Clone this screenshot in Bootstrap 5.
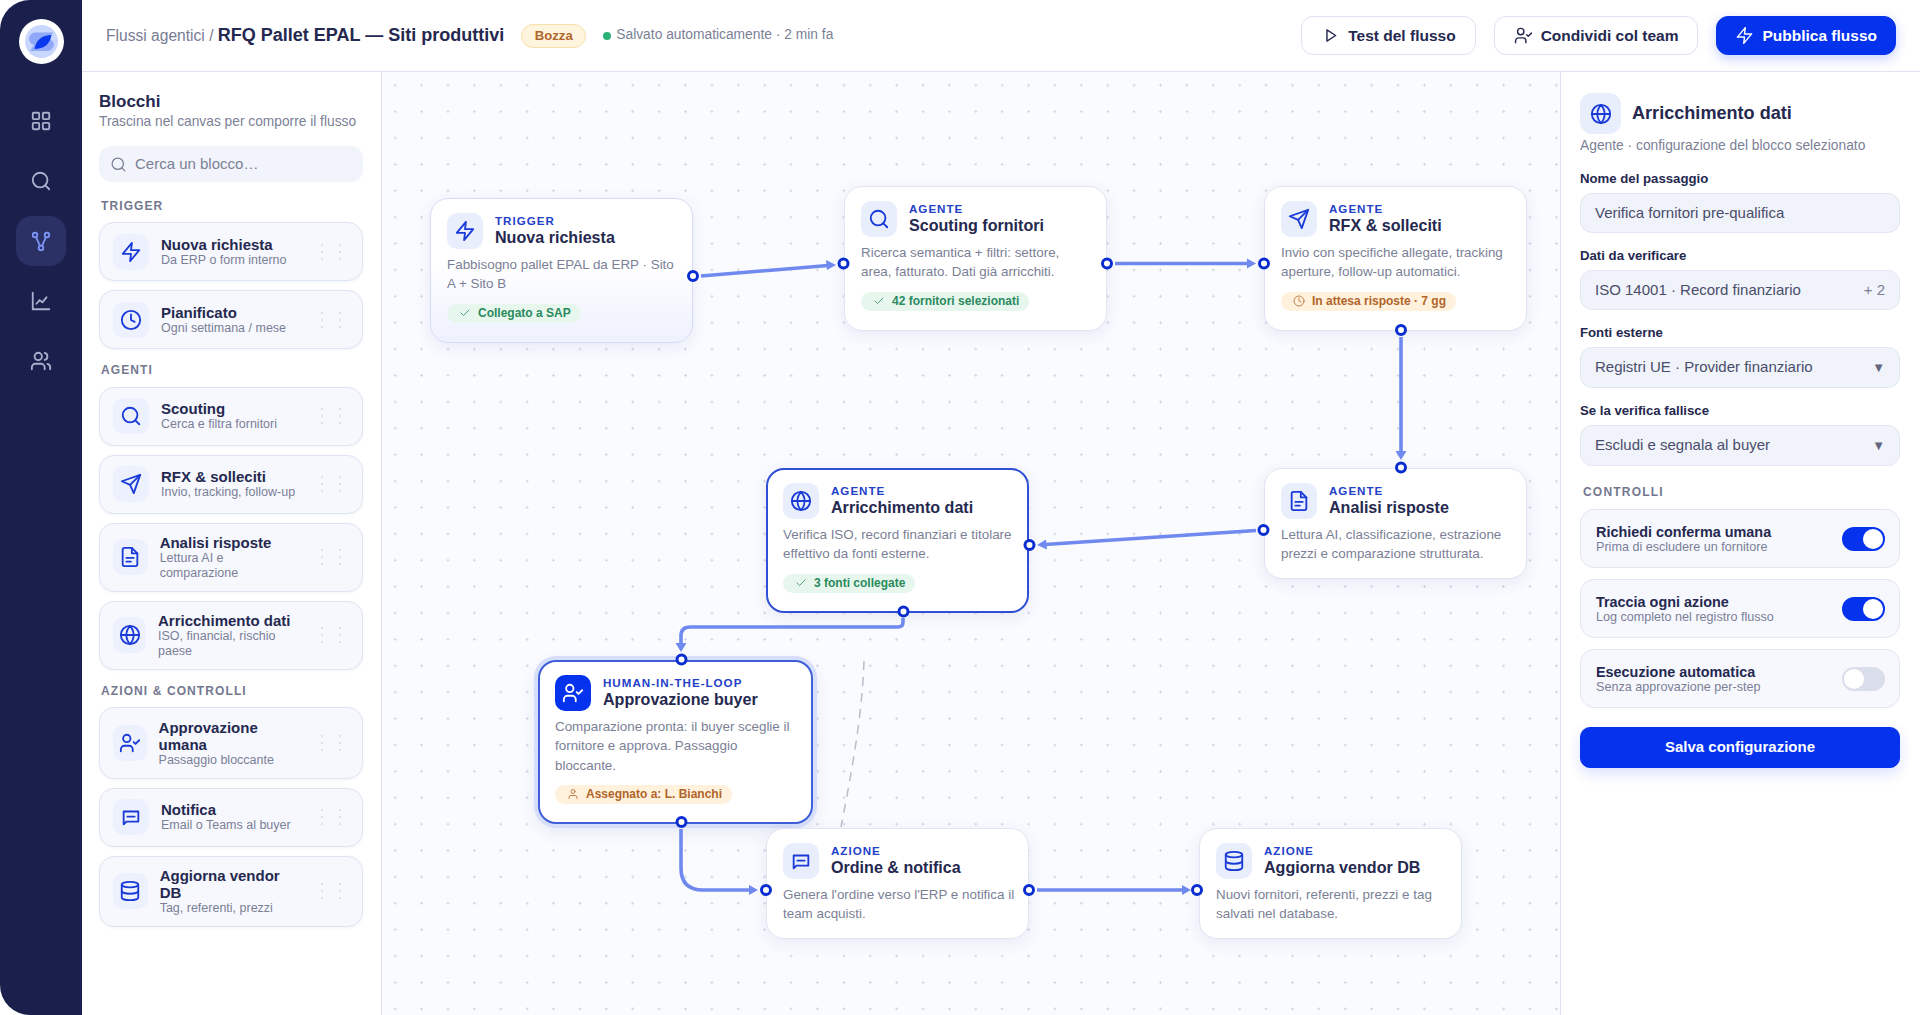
<!DOCTYPE html>
<html lang="it">
  <head>
    <meta charset="UTF-8" />
    <meta name="viewport" content="width=device-width, initial-scale=1.0" />
    <title>RFQ Pallet EPAL - Flussi agentici</title>
    <link href="https://cdn.jsdelivr.net/npm/bootstrap@5.3.0/dist/css/bootstrap.min.css" rel="stylesheet" />
    <style>
      body {
        background: #fff;
        font-family: "Liberation Sans", Arial, sans-serif;
        color: #25284f;
        overflow: hidden;
      }
      .app-shell { height: 1015px; }
      .ico { width: 22px; height: 22px; fill: none; stroke: currentColor; stroke-width: 2; stroke-linecap: round; stroke-linejoin: round; flex: none; }

      /* rail */
      .rail { width: 82px; background: #1a1f4b; border-radius: 30px 0 0 30px; padding-top: 19px; }
      .rail-logo { width: 45px; height: 45px; margin-bottom: 32px; }
      .rail-item { width: 50px; height: 50px; border-radius: 16px; color: #a9afcc; margin-bottom: 10px; }
      .rail-item.is-active { background: #2b3165; color: #7c94f6; }

      /* top bar */
      .topbar { height: 72px; border-bottom: 1px solid #dfe3ef; padding: 0 24px; }
      .crumb { font-size: 15.6px; color: #787c93; }
      .crumb strong { font-size: 18px; color: #25284f; }
      .draft-tag { font-size: 13.2px; font-weight: 700; color: #b1652a; background: #fff5df; border: 1px solid #f7e0ab; border-radius: 12px; height: 24px; padding: 0 12.5px; margin-left: 17px; }
      .save-dot { width: 8px; height: 8px; border-radius: 50%; background: #2bb077; margin-left: 17px; margin-right: 5px; }
      .save-note { font-size: 13.8px; color: #7b7f96; }
      .bar-actions { gap: 18px; }
      .bar-btn { height: 39px; border-radius: 12px; border: 1px solid #dfe3ef; background: #fff; color: #25284f; font-size: 15.5px; font-weight: 700; padding: 0 19px; gap: 8px; }
      .bar-btn .ico { width: 19px; height: 19px; stroke-width: 1.8; }
      .bar-btn.is-primary { background: #0432ed; border-color: #0432ed; color: #fff; padding: 0 18px; box-shadow: 0 4px 12px rgba(4, 50, 237, .22); }
      .bar-btn.is-primary:hover, .bar-btn.is-primary:focus { background: #0432ed; color: #fff; }

      /* left blocks */
      .blocks { width: 300px; border-right: 1px solid #dfe3ef; padding: 20px 18px 0 17px; }
      .blocks-title { font-size: 17px; font-weight: 700; line-height: 20px; }
      .blocks-sub { font-size: 13.75px; line-height: 20px; color: #7b7f96; }
      .block-search { height: 36px; background: #f1f4fa; border-radius: 12px; margin: 14px 0 16.5px; padding: 0 11px; gap: 8px; color: #7b7f96; font-size: 15px; }
      .block-search .ico { width: 17px; height: 17px; stroke-width: 1.8; }
      .group-label { font-size: 12px; line-height: 14px; font-weight: 700; letter-spacing: 1.1px; color: #74788f; margin: 14px 0 9.5px 2px; }
      .block-card { flex-direction: row; align-items: center; gap: 12px; background: #f6f8fe; border: 1px solid #dfe4f2; border-radius: 15px; padding: 10.5px 14px 10.5px 13px; margin-bottom: 9px; box-shadow: 0 1px 3px rgba(40, 60, 140, .06); }
      .block-ico { width: 36px; height: 36px; border-radius: 10px; background: #edf1fd; color: #1a3bd8; }
      .block-name { font-size: 15px; line-height: 17px; font-weight: 700; }
      .block-desc { font-size: 12.5px; line-height: 14.5px; color: #7b7f96; }
      .grip { width: 36px; height: 18px; flex: none; fill: #d6dae6; }

      /* canvas */
      .flow-canvas {
        position: relative;
        flex: 1;
        background-color: #fafbff;
        background-image: radial-gradient(circle, #d2d6e5 1px, transparent 1.2px);
        background-size: 26.4px 26.4px;
      }
      .edges { position: absolute; inset: 0; width: 100%; height: 100%; z-index: 2; pointer-events: none; }
      .edge { fill: none; stroke: #7089ee; stroke-width: 3.6; }
      .edge-head { fill: #7089ee; }
      .edge-dash { fill: none; stroke: #b9bdca; stroke-width: 1.5; stroke-dasharray: 9 7; }
      .port { fill: #fff; stroke: #0a2dd0; stroke-width: 3; }
      .flow-node { position: absolute; width: 263px; padding: 14px 14px 19px 16px; background: #fff; border: 1px solid #e1e5f2; border-radius: 18px; box-shadow: 0 4px 16px rgba(40, 60, 140, .09); }
      .node-head { gap: 12px; }
      .node-ico { width: 36px; height: 36px; border-radius: 10px; background: #e9eefd; color: #1a3bd8; }
      .node-kind { font-size: 11.6px; line-height: 13px; font-weight: 700; letter-spacing: 1px; color: #2240c8; margin-top: 1px; }
      .node-name { font-size: 16.1px; line-height: 20px; font-weight: 700; }
      .node-text { font-size: 13.4px; line-height: 19.3px; color: #7b7f96; margin-top: 6px; }
      .node-pill { width: fit-content; height: 19px; border-radius: 10px; padding: 0 10px 0 12px; margin-top: 10px; gap: 7px; font-size: 12px; font-weight: 700; }
      .node-pill .ico { width: 12px; height: 12px; stroke-width: 1.6; }
      .pill-ok { background: #e8f7ee; color: #2a8a5d; }
      .pill-wait { background: #fff1dc; color: #b1652a; }
      #nodeTrigger { left: 48px; top: 126px; background: linear-gradient(180deg, #fff 45%, #eef1fe 100%); border-color: #d4dbf8; }
      #nodeScout { left: 462px; top: 114px; }
      #nodeRfx { left: 882px; top: 114px; }
      #nodeAnalisi { left: 882px; top: 396px; padding-bottom: 14px; }
      #nodeEnrich { left: 384px; top: 396px; border: 2px solid #2f50d4; padding: 13px 13px 18px 15px; }
      #nodeBuyer { left: 156px; top: 588px; width: 275px; border: 2px solid #3f5fd8; padding: 13px 13px 18px 15px; box-shadow: 0 0 0 4px #d7defb, 0 6px 18px rgba(40, 60, 140, .12); }
      #nodeBuyer .node-ico { background: #0432ed; color: #fff; }
      #nodeOrder { left: 384px; top: 756px; padding: 14px 10px 14px 16px; }
      #nodeVendor { left: 817px; top: 756px; padding-bottom: 14px; }

      /* right config */
      .config { width: 360px; border-left: 1px solid #dfe3ef; margin-left: 0; padding: 21px 20px 0 19px; }
      .config-head { gap: 11px; }
      .config-ico { width: 41px; height: 41px; border-radius: 12px; background: #e9eefd; color: #1a3bd8; }
      .config-title { font-size: 18.1px; font-weight: 700; padding-top: 1px; }
      .config-sub { font-size: 13.8px; line-height: 16px; color: #7b7f96; margin: 4px 0 17px; }
      .field-label { font-size: 13.2px; line-height: 16px; font-weight: 700; margin-bottom: 6px; }
      .field-box { height: 40px; background: #f0f3fa; border: 1px solid #e2e6f2; border-radius: 12px; padding: 0 14px; font-size: 15px; color: #4a4d6b; margin-bottom: 15px; }
      .field-box.is-tall { height: 41px; }
      .field-more { color: #7b7f96; }
      .field-caret { font-size: 13px; color: #62667f; }
      .section-label { font-size: 12px; line-height: 14px; font-weight: 700; letter-spacing: 1.2px; color: #74788f; margin: 19px 0 10px 3px; }
      .switch-card { flex-direction: row; align-items: center; justify-content: space-between; height: 59px; background: #f6f8fe; border: 1px solid #e2e6f2; border-radius: 14px; padding: 0 14px 0 15px; margin-bottom: 11px; }
      .switch-name { font-size: 14.4px; line-height: 16px; font-weight: 700; }
      .switch-desc { font-size: 12.6px; line-height: 14px; color: #7b7f96; }
      .switch-card .form-check-input {
        width: 43px;
        height: 24px;
        margin: 0;
        border: 0;
        background-color: #d9deea;
        background-image: url("data:image/svg+xml,%3csvg xmlns='http://www.w3.org/2000/svg' viewBox='-4 -4 8 8'%3e%3ccircle r='3.35' fill='%23fff'/%3e%3c/svg%3e");
      }
      .switch-card .form-check-input:checked { background-color: #0432ed; border-color: #0432ed; }
      .switch-card .form-switch { padding: 0; min-height: 0; margin: 0; }
      .save-btn { height: 41px; margin-top: 8px; background: #0432ed; border-color: #0432ed; color: #fff; border-radius: 10px; font-size: 15px; font-weight: 700; box-shadow: 0 6px 14px rgba(4, 50, 237, .14); }
      .save-btn:hover, .save-btn:focus { background: #0432ed; color: #fff; }
    </style>
  </head>
  <body>
    <svg class="d-none">
      <symbol id="i-grid" viewBox="0 0 24 24"><rect x="3" y="3" width="7" height="7" rx="1" /><rect x="14" y="3" width="7" height="7" rx="1" /><rect x="3" y="14" width="7" height="7" rx="1" /><rect x="14" y="14" width="7" height="7" rx="1" /></symbol>
      <symbol id="i-search" viewBox="0 0 24 24"><circle cx="11" cy="11" r="8" /><path d="m21 21-4.3-4.3" /></symbol>
      <symbol id="i-flow" viewBox="0 0 24 24"><circle cx="5.5" cy="5.5" r="2.5" /><circle cx="18.5" cy="5.5" r="2.5" /><circle cx="12" cy="19.5" r="2.5" /><path d="m6.6 7.8 4.3 9.4M17.4 7.8l-4.3 9.4" /></symbol>
      <symbol id="i-chart" viewBox="0 0 24 24"><path d="M3 3v18h18" /><path d="m7 15 3.5-4 3 2.5L18 8" /></symbol>
      <symbol id="i-users" viewBox="0 0 24 24"><path d="M16 21v-2a4 4 0 0 0-4-4H6a4 4 0 0 0-4 4v2" /><circle cx="9" cy="7" r="4" /><path d="M22 21v-2a4 4 0 0 0-3-3.87M16 3.13a4 4 0 0 1 0 7.75" /></symbol>
      <symbol id="i-zap" viewBox="0 0 24 24"><path d="M13 2 3 14h9l-1 8 10-12h-9l1-8z" /></symbol>
      <symbol id="i-clock" viewBox="0 0 24 24"><circle cx="12" cy="12" r="10" /><path d="M12 6v6l4 2" /></symbol>
      <symbol id="i-send" viewBox="0 0 24 24"><path d="M22 2 15 22l-4-9-9-4 20-7z" /><path d="M22 2 11 13" /></symbol>
      <symbol id="i-file" viewBox="0 0 24 24"><path d="M14 2H6a2 2 0 0 0-2 2v16a2 2 0 0 0 2 2h12a2 2 0 0 0 2-2V8z" /><path d="M14 2v6h6M8 13h8M8 17h5" /></symbol>
      <symbol id="i-globe" viewBox="0 0 24 24"><circle cx="12" cy="12" r="10" /><path d="M2 12h20M12 2a15.3 15.3 0 0 1 4 10 15.3 15.3 0 0 1-4 10 15.3 15.3 0 0 1-4-10 15.3 15.3 0 0 1 4-10z" /></symbol>
      <symbol id="i-usercheck" viewBox="0 0 24 24"><path d="M15 21v-2a4 4 0 0 0-4-4H6a4 4 0 0 0-4 4v2" /><circle cx="8.5" cy="7" r="4" /><path d="m16 11 2 2 4-4" /></symbol>
      <symbol id="i-msg" viewBox="0 0 24 24"><path d="M4 6h16v11H7l-3 3z" /><path d="M8 11.500h8" /></symbol>
      <symbol id="i-db" viewBox="0 0 24 24"><ellipse cx="12" cy="5" rx="9" ry="3" /><path d="M3 5v14a9 3 0 0 0 18 0V5" /><path d="M3 12a9 3 0 0 0 18 0" /></symbol>
      <symbol id="i-play" viewBox="0 0 24 24"><path d="M7.500 5 18.500 12 7.500 19z" /></symbol>
      <symbol id="i-check" viewBox="0 0 24 24"><path d="M20 6 9 17l-5-5" /></symbol>
      <symbol id="i-user" viewBox="0 0 24 24"><path d="M20 21v-2a4 4 0 0 0-4-4H8a4 4 0 0 0-4 4v2" /><circle cx="12" cy="7" r="4" /></symbol>
      <symbol id="i-grip" viewBox="0 0 36 18"><circle cx="10" cy="2" r="1" /><circle cx="10" cy="9" r="1" /><circle cx="10" cy="16" r="1" /><circle cx="28" cy="2" r="1" /><circle cx="28" cy="9" r="1" /><circle cx="28" cy="16" r="1" /></symbol>
    </svg>

    <div class="app-shell d-flex">
      <nav class="rail d-flex flex-column align-items-center flex-shrink-0">
        <svg class="rail-logo" viewBox="0 0 45 45">
          <circle cx="22.5" cy="22.5" r="22.5" fill="#fff" />
          <circle cx="22.5" cy="22.5" r="16.5" fill="#c9d6fd" />
          <path d="M16 13.500H34L30 20a7 7 0 0 1 5 6 7 7 0 0 1-7 6H11l4-6a7 7 0 0 1-5-6 7 7 0 0 1 6-6.500z" fill="#8fa8f9" />
          <path d="M15.500 30C17 21 23 16 32.500 16 31 25 25 30 15.500 30z" fill="#0a38ee" />
        </svg>
        <a class="rail-item d-flex align-items-center justify-content-center" href="#"><svg class="ico"><use href="#i-grid" /></svg></a>
        <a class="rail-item d-flex align-items-center justify-content-center" href="#"><svg class="ico"><use href="#i-search" /></svg></a>
        <a class="rail-item is-active d-flex align-items-center justify-content-center" href="#"><svg class="ico"><use href="#i-flow" /></svg></a>
        <a class="rail-item d-flex align-items-center justify-content-center" href="#"><svg class="ico"><use href="#i-chart" /></svg></a>
        <a class="rail-item d-flex align-items-center justify-content-center" href="#"><svg class="ico"><use href="#i-users" /></svg></a>
      </nav>

      <div class="d-flex flex-column flex-grow-1">
        <header class="topbar d-flex align-items-center flex-shrink-0">
          <div class="crumb">Flussi agentici / <strong>RFQ Pallet EPAL — Siti produttivi</strong></div>
          <span class="draft-tag d-inline-flex align-items-center">Bozza</span>
          <span class="save-dot"></span>
          <span class="save-note">Salvato automaticamente · 2 min fa</span>
          <div class="bar-actions d-flex align-items-center ms-auto">
            <button class="btn bar-btn d-flex align-items-center"><svg class="ico"><use href="#i-play" /></svg>Test del flusso</button>
            <button class="btn bar-btn d-flex align-items-center"><svg class="ico"><use href="#i-usercheck" /></svg>Condividi col team</button>
            <button class="btn bar-btn is-primary d-flex align-items-center"><svg class="ico"><use href="#i-zap" /></svg>Pubblica flusso</button>
          </div>
        </header>

        <div class="d-flex flex-grow-1">
          <aside class="blocks flex-shrink-0">
            <div class="blocks-title">Blocchi</div>
            <div class="blocks-sub">Trascina nel canvas per comporre il flusso</div>
            <div class="block-search d-flex align-items-center"><svg class="ico"><use href="#i-search" /></svg>Cerca un blocco…</div>

            <div class="group-label">TRIGGER</div>
            <div class="card block-card">
              <div class="block-ico d-flex align-items-center justify-content-center"><svg class="ico"><use href="#i-zap" /></svg></div>
              <div class="flex-grow-1"><div class="block-name">Nuova richiesta</div><div class="block-desc">Da ERP o form interno</div></div>
              <svg class="grip"><use href="#i-grip" /></svg>
            </div>
            <div class="card block-card">
              <div class="block-ico d-flex align-items-center justify-content-center"><svg class="ico"><use href="#i-clock" /></svg></div>
              <div class="flex-grow-1"><div class="block-name">Pianificato</div><div class="block-desc">Ogni settimana / mese</div></div>
              <svg class="grip"><use href="#i-grip" /></svg>
            </div>

            <div class="group-label">AGENTI</div>
            <div class="card block-card">
              <div class="block-ico d-flex align-items-center justify-content-center"><svg class="ico"><use href="#i-search" /></svg></div>
              <div class="flex-grow-1"><div class="block-name">Scouting</div><div class="block-desc">Cerca e filtra fornitori</div></div>
              <svg class="grip"><use href="#i-grip" /></svg>
            </div>
            <div class="card block-card">
              <div class="block-ico d-flex align-items-center justify-content-center"><svg class="ico"><use href="#i-send" /></svg></div>
              <div class="flex-grow-1"><div class="block-name">RFX &amp; solleciti</div><div class="block-desc">Invio, tracking, follow-up</div></div>
              <svg class="grip"><use href="#i-grip" /></svg>
            </div>
            <div class="card block-card">
              <div class="block-ico d-flex align-items-center justify-content-center"><svg class="ico"><use href="#i-file" /></svg></div>
              <div class="flex-grow-1"><div class="block-name">Analisi risposte</div><div class="block-desc">Lettura AI e comparazione</div></div>
              <svg class="grip"><use href="#i-grip" /></svg>
            </div>
            <div class="card block-card">
              <div class="block-ico d-flex align-items-center justify-content-center"><svg class="ico"><use href="#i-globe" /></svg></div>
              <div class="flex-grow-1"><div class="block-name">Arricchimento dati</div><div class="block-desc">ISO, financial, rischio paese</div></div>
              <svg class="grip"><use href="#i-grip" /></svg>
            </div>

            <div class="group-label">AZIONI &amp; CONTROLLI</div>
            <div class="card block-card">
              <div class="block-ico d-flex align-items-center justify-content-center"><svg class="ico"><use href="#i-usercheck" /></svg></div>
              <div class="flex-grow-1"><div class="block-name">Approvazione umana</div><div class="block-desc">Passaggio bloccante</div></div>
              <svg class="grip"><use href="#i-grip" /></svg>
            </div>
            <div class="card block-card">
              <div class="block-ico d-flex align-items-center justify-content-center"><svg class="ico"><use href="#i-msg" /></svg></div>
              <div class="flex-grow-1"><div class="block-name">Notifica</div><div class="block-desc">Email o Teams al buyer</div></div>
              <svg class="grip"><use href="#i-grip" /></svg>
            </div>
            <div class="card block-card">
              <div class="block-ico d-flex align-items-center justify-content-center"><svg class="ico"><use href="#i-db" /></svg></div>
              <div class="flex-grow-1"><div class="block-name">Aggiorna vendor DB</div><div class="block-desc">Tag, referenti, prezzi</div></div>
              <svg class="grip"><use href="#i-grip" /></svg>
            </div>
          </aside>

          <main class="flow-canvas">
            <div class="flow-node" id="nodeTrigger">
              <div class="node-head d-flex">
                <div class="node-ico d-flex align-items-center justify-content-center"><svg class="ico"><use href="#i-zap" /></svg></div>
                <div><div class="node-kind">TRIGGER</div><div class="node-name">Nuova richiesta</div></div>
              </div>
              <div class="node-text">Fabbisogno pallet EPAL da ERP · Sito A + Sito B</div>
              <div class="node-pill pill-ok d-flex align-items-center"><svg class="ico"><use href="#i-check" /></svg>Collegato a SAP</div>
            </div>

            <div class="flow-node" id="nodeScout">
              <div class="node-head d-flex">
                <div class="node-ico d-flex align-items-center justify-content-center"><svg class="ico"><use href="#i-search" /></svg></div>
                <div><div class="node-kind">AGENTE</div><div class="node-name">Scouting fornitori</div></div>
              </div>
              <div class="node-text">Ricerca semantica + filtri: settore, area, fatturato. Dati già arricchiti.</div>
              <div class="node-pill pill-ok d-flex align-items-center"><svg class="ico"><use href="#i-check" /></svg>42 fornitori selezionati</div>
            </div>

            <div class="flow-node" id="nodeRfx">
              <div class="node-head d-flex">
                <div class="node-ico d-flex align-items-center justify-content-center"><svg class="ico"><use href="#i-send" /></svg></div>
                <div><div class="node-kind">AGENTE</div><div class="node-name">RFX &amp; solleciti</div></div>
              </div>
              <div class="node-text">Invio con specifiche allegate, tracking aperture, follow-up automatici.</div>
              <div class="node-pill pill-wait d-flex align-items-center"><svg class="ico"><use href="#i-clock" /></svg>In attesa risposte · 7 gg</div>
            </div>

            <div class="flow-node" id="nodeAnalisi">
              <div class="node-head d-flex">
                <div class="node-ico d-flex align-items-center justify-content-center"><svg class="ico"><use href="#i-file" /></svg></div>
                <div><div class="node-kind">AGENTE</div><div class="node-name">Analisi risposte</div></div>
              </div>
              <div class="node-text">Lettura AI, classificazione, estrazione prezzi e comparazione strutturata.</div>
            </div>

            <div class="flow-node" id="nodeEnrich">
              <div class="node-head d-flex">
                <div class="node-ico d-flex align-items-center justify-content-center"><svg class="ico"><use href="#i-globe" /></svg></div>
                <div><div class="node-kind">AGENTE</div><div class="node-name">Arricchimento dati</div></div>
              </div>
              <div class="node-text">Verifica ISO, record finanziari e titolare effettivo da fonti esterne.</div>
              <div class="node-pill pill-ok d-flex align-items-center"><svg class="ico"><use href="#i-check" /></svg>3 fonti collegate</div>
            </div>

            <div class="flow-node" id="nodeBuyer">
              <div class="node-head d-flex">
                <div class="node-ico d-flex align-items-center justify-content-center"><svg class="ico"><use href="#i-usercheck" /></svg></div>
                <div><div class="node-kind">HUMAN-IN-THE-LOOP</div><div class="node-name">Approvazione buyer</div></div>
              </div>
              <div class="node-text">Comparazione pronta: il buyer sceglie il fornitore e approva. Passaggio bloccante.</div>
              <div class="node-pill pill-wait d-flex align-items-center"><svg class="ico"><use href="#i-user" /></svg>Assegnato a: L. Bianchi</div>
            </div>

            <div class="flow-node" id="nodeOrder">
              <div class="node-head d-flex">
                <div class="node-ico d-flex align-items-center justify-content-center"><svg class="ico"><use href="#i-msg" /></svg></div>
                <div><div class="node-kind">AZIONE</div><div class="node-name">Ordine &amp; notifica</div></div>
              </div>
              <div class="node-text">Genera l'ordine verso l'ERP e notifica il team acquisti.</div>
            </div>

            <div class="flow-node" id="nodeVendor">
              <div class="node-head d-flex">
                <div class="node-ico d-flex align-items-center justify-content-center"><svg class="ico"><use href="#i-db" /></svg></div>
                <div><div class="node-kind">AZIONE</div><div class="node-name">Aggiorna vendor DB</div></div>
              </div>
              <div class="node-text">Nuovi fornitori, referenti, prezzi e tag salvati nel database.</div>
            </div>

            <!-- viewBox uses page coordinates so the edges read like the mockup -->
            <svg class="edges" viewBox="382 72 1178 943" preserveAspectRatio="none">
              <path class="edge-dash" d="M864 661C862 720 850 780 841 827" />

              <path class="edge" d="M701 276 828 265.5" />
              <path class="edge-head" d="m836 265-9 5-1-10z" />
              <path class="edge" d="M1115 263.5H1248" />
              <path class="edge-head" d="m1256 263.5-9 5v-10z" />
              <path class="edge" d="M1401 337V452" />
              <path class="edge-head" d="m1401 460-5.5-9h11z" />
              <path class="edge" d="M1256 530.500 1045 544.500" />
              <path class="edge-head" d="m1037 545 9-5.500 1 10z" />
              <path class="edge" d="M903 618V622Q903 627 898 627H690Q681 627 681 636V644" />
              <path class="edge-head" d="m681 652-5.500-9h11z" />
              <path class="edge" d="M681 829V868Q681 890 703 890H750" />
              <path class="edge-head" d="m758 890-9 5v-10z" />
              <path class="edge" d="M1037 890H1183" />
              <path class="edge-head" d="m1191 890-9 5v-10z" />

              <circle class="port" cx="693" cy="276" r="4.500" />
              <circle class="port" cx="843.500" cy="263.500" r="4.500" />
              <circle class="port" cx="1107" cy="263.500" r="4.500" />
              <circle class="port" cx="1264" cy="263.500" r="4.500" />
              <circle class="port" cx="1401" cy="330" r="4.500" />
              <circle class="port" cx="1401" cy="467.500" r="4.500" />
              <circle class="port" cx="1263.500" cy="530" r="4.500" />
              <circle class="port" cx="1029.500" cy="545" r="4.500" />
              <circle class="port" cx="903.500" cy="611.500" r="4.500" />
              <circle class="port" cx="681.500" cy="659.500" r="4.500" />
              <circle class="port" cx="681.500" cy="822" r="4.500" />
              <circle class="port" cx="766" cy="890" r="4.500" />
              <circle class="port" cx="1029" cy="890" r="4.500" />
              <circle class="port" cx="1197" cy="890" r="4.500" />
            </svg>
          </main>

          <aside class="config flex-shrink-0">
            <div class="config-head d-flex align-items-center">
              <div class="config-ico d-flex align-items-center justify-content-center"><svg class="ico"><use href="#i-globe" /></svg></div>
              <div class="config-title">Arricchimento dati</div>
            </div>
            <div class="config-sub">Agente · configurazione del blocco selezionato</div>

            <div class="field-label">Nome del passaggio</div>
            <div class="field-box d-flex align-items-center">Verifica fornitori pre-qualifica</div>
            <div class="field-label">Dati da verificare</div>
            <div class="field-box d-flex align-items-center justify-content-between">ISO 14001 · Record finanziario <span class="field-more">+ 2</span></div>
            <div class="field-label">Fonti esterne</div>
            <div class="field-box is-tall d-flex align-items-center justify-content-between">Registri UE · Provider finanziario <span class="field-caret">▼</span></div>
            <div class="field-label">Se la verifica fallisce</div>
            <div class="field-box is-tall d-flex align-items-center justify-content-between">Escludi e segnala al buyer <span class="field-caret">▼</span></div>

            <div class="section-label">CONTROLLI</div>
            <div class="card switch-card">
              <div><div class="switch-name">Richiedi conferma umana</div><div class="switch-desc">Prima di escludere un fornitore</div></div>
              <div class="form-check form-switch"><input class="form-check-input" type="checkbox" checked /></div>
            </div>
            <div class="card switch-card">
              <div><div class="switch-name">Traccia ogni azione</div><div class="switch-desc">Log completo nel registro flusso</div></div>
              <div class="form-check form-switch"><input class="form-check-input" type="checkbox" checked /></div>
            </div>
            <div class="card switch-card">
              <div><div class="switch-name">Esecuzione automatica</div><div class="switch-desc">Senza approvazione per-step</div></div>
              <div class="form-check form-switch"><input class="form-check-input" type="checkbox" /></div>
            </div>
            <button class="btn save-btn w-100">Salva configurazione</button>
          </aside>
        </div>
      </div>
    </div>

    <script src="https://cdn.jsdelivr.net/npm/bootstrap@5.3.0/dist/js/bootstrap.bundle.min.js"></script>
  </body>
</html>
